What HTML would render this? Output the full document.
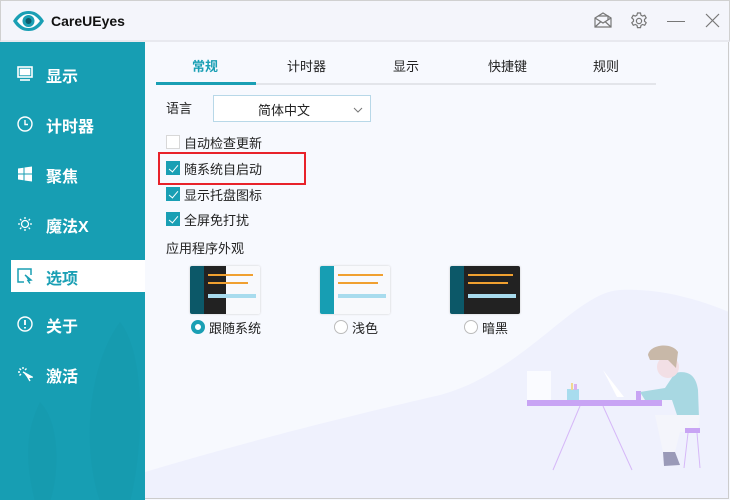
<!DOCTYPE html>
<html><head><meta charset="utf-8"><style>
*{margin:0;padding:0;box-sizing:border-box}
body{width:730px;height:500px;overflow:hidden;font-family:"Liberation Sans","Noto Sans CJK SC",sans-serif;background:#f7f9fe;position:relative;font-size:13px;color:#222}
.title{position:absolute;left:0;top:0;width:730px;height:42px;background:#f4f5fb;border:1px solid #d0d0d0;border-bottom:2px solid #e8e9ef}
.side{position:absolute;left:0;top:42px;width:145px;height:458px;background:#179eb3;overflow:hidden}
.item{position:absolute;left:0;width:145px;height:32px;color:#fff;font-weight:bold;font-size:16px}
.item .t{position:absolute;left:46px;top:5px}
.item svg{position:absolute;left:17px;top:8px}
.sel{left:11px;width:134px;background:#fff;color:#1a9fb4}
.sel .t{left:35px}
.sel svg{left:6px}
.content{position:absolute;left:145px;top:42px;width:584px;height:457px;border-right:1px solid #ccc;border-bottom:1px solid #ccc;overflow:hidden}
.abs{position:absolute}
.cb{position:absolute;left:166px;width:14px;height:14px;border:1px solid #d8d8d8;background:#fff}
.cb.on{background:#1a9fb4;border-color:#1a9fb4}
.cb.on:after{content:"";position:absolute;left:4px;top:1px;width:4px;height:8px;border:solid #fff;border-width:0 1.5px 1.5px 0;transform:rotate(40deg)}
.lbl{position:absolute;left:184px;font-size:13px}
.radio{position:absolute;width:14px;height:14px;border-radius:50%;border:1px solid #bbb;background:#fff}
.thumb{position:absolute;width:70px;height:48px;border-radius:2px;overflow:hidden;box-shadow:0 0 2px #ccc}
</style></head><body>
<div class="title">
<svg class="abs" style="left:11px;top:9px" width="33" height="22" viewBox="0 0 33 22"><path d="M1 11C6 3 11 1 16.5 1S27 3 32 11C27 19 22 21 16.5 21S6 19 1 11Z" fill="#1a9fb4"/><path d="M5 11C9 6 12 4 16.5 4S24 6 28 11C24 16 21 18 16.5 18S9 16 5 11Z" fill="#fff"/><circle cx="16.5" cy="11" r="6" fill="#1a9fb4"/><circle cx="16.5" cy="11" r="3" fill="#0d5c6b"/></svg>
<div class="abs" style="left:50px;top:12px;font-weight:bold;font-size:14px;color:#111">CareUEyes</div>
<svg class="abs" style="left:593px;top:11px" width="18" height="16" viewBox="0 0 18 16" fill="none" stroke="#777" stroke-width="1.2"><path d="M1 6L9 1L17 6V15H1Z"/><path d="M1 6L9 11L17 6M1 15L7 9.5M17 15L11 9.5"/><path d="M4 4H14V8"/></svg>
<svg class="abs" style="left:629px;top:11px" width="18" height="18" viewBox="0 0 18 18" fill="none" stroke="#777" stroke-width="1.2"><path d="M7.5 1h3l.5 2.2 1.6.9 2.1-.8 1.5 2.6-1.7 1.5v1.8l1.7 1.5-1.5 2.6-2.1-.8-1.6.9-.5 2.2h-3l-.5-2.2-1.6-.9-2.1.8-1.5-2.6 1.7-1.5V7.4L1.7 5.9l1.5-2.6 2.1.8 1.6-.9Z"/><circle cx="9" cy="9" r="2.6"/></svg>
<div class="abs" style="left:666px;top:20px;width:18px;height:1px;background:#777"></div>
<svg class="abs" style="left:704px;top:12px" width="15" height="15" viewBox="0 0 15 15" stroke="#777" stroke-width="1.2"><path d="M1 1L14 14M14 1L1 14"/></svg>
</div>
<div class="side">
<svg class="abs" style="left:20px;top:280px;opacity:.06" width="125" height="180" viewBox="0 0 125 180"><path d="M100 0C125 30 125 120 110 180H80C60 120 70 40 100 0Z" fill="#0a6f80"/><path d="M20 80C40 100 40 150 30 180H15C5 140 5 110 20 80Z" fill="#0a6f80"/></svg>
<div class="item" style="top:16px"><svg width="16" height="16" viewBox="0 0 16 16" fill="none" stroke="#fff" stroke-width="1.6"><rect x="1" y="1" width="14" height="10"/><rect x="3.5" y="3.5" width="9" height="5" fill="#fff"/><path d="M3 14H13"/></svg><span class="t">显示</span></div>
<div class="item" style="top:66px"><svg width="16" height="16" viewBox="0 0 16 16" fill="none" stroke="#fff" stroke-width="1.4"><circle cx="8" cy="8" r="7"/><path d="M8 4V8.5H11"/></svg><span class="t">计时器</span></div>
<div class="item" style="top:116px"><svg width="16" height="16" viewBox="0 0 16 16" fill="#fff"><path d="M1 2.5L6.5 1.7V7.5H1ZM7.5 1.5L15 .5V7.5H7.5ZM1 8.5H6.5V14.3L1 13.5ZM7.5 8.5H15V15.5L7.5 14.5Z"/></svg><span class="t">聚焦</span></div>
<div class="item" style="top:166px"><svg width="16" height="16" viewBox="0 0 16 16" fill="none" stroke="#fff" stroke-width="1.3"><circle cx="8" cy="8" r="3.5"/><path d="M8 1V3M8 13V15M1 8H3M13 8H15M3 3L4.4 4.4M11.6 11.6L13 13M3 13L4.4 11.6M11.6 4.4L13 3"/></svg><span class="t">魔法X</span></div>
<div class="item sel" style="top:218px"><svg width="16" height="16" viewBox="0 0 16 16" fill="none" stroke="#1a9fb4" stroke-width="1.5"><path d="M14 7V1H1V14H7"/><path d="M8 7L14 12L11 12.5L13 15.5" fill="#1a9fb4"/></svg><span class="t">选项</span></div>
<div class="item" style="top:266px"><svg width="16" height="16" viewBox="0 0 16 16" fill="none" stroke="#fff" stroke-width="1.4"><circle cx="8" cy="8" r="7"/><path d="M8 4V9M8 11V12.5" stroke-width="1.8"/></svg><span class="t">关于</span></div>
<div class="item" style="top:316px"><svg width="16" height="16" viewBox="0 0 16 16" fill="none" stroke="#fff" stroke-width="1.4"><path d="M6 1V3M1 6H3M2.5 2.5L4 4M9.5 2.5L8 4M2.5 9.5L4 8"/><path d="M6 6L15 11L11 11.5L13 15" fill="#fff"/></svg><span class="t">激活</span></div>
</div>
<div class="content">
<svg class="abs" style="left:0;top:0" width="584" height="457" viewBox="0 0 584 457"><path d="M0 430C100 400 200 375 295 353C380 330 430 250 475 248C520 246 560 260 584 270V457H0Z" fill="#eff1fd"/></svg>
<div class="abs" style="left:11px;top:41px;width:500px;height:2px;background:#e3e5ea"></div>
<div class="abs" style="left:11px;top:40px;width:100px;height:3px;background:#1a9fb4"></div>
<div class="abs" style="left:47px;top:14px;color:#1a9fb4;font-weight:bold">常规</div>
<div class="abs" style="left:142px;top:14px">计时器</div>
<div class="abs" style="left:248px;top:14px">显示</div>
<div class="abs" style="left:343px;top:14px">快捷键</div>
<div class="abs" style="left:448px;top:14px">规则</div>
</div>
<svg class="abs" style="left:0;top:0" width="730" height="500" viewBox="0 0 730 500">
<rect x="527" y="371" width="24" height="29" fill="#fafbff"/>
<rect x="567" y="389" width="12" height="11" fill="#a8dcee"/><rect x="571" y="383" width="2" height="7" fill="#f0d890"/><rect x="574" y="384" width="3" height="6" fill="#d8b0f0"/>
<path d="M603 370L617 397H624Z" fill="#ffffff"/>
<rect x="527" y="400" width="135" height="6" fill="#c8a4f4"/>
<path d="M580 406L553 470M603 406L632 470" stroke="#d6b8f8" stroke-width="1"/>
<rect x="636" y="391" width="5" height="10" fill="#c8a4f4"/>
<path d="M640 392L665 388L675 373C688 370 696 375 698 390L699 418L678 418L672 400L645 400Z" fill="#a8d8e2"/>
<path d="M655 415L700 415L698 432L680 432L675 452H663Z" fill="#f4f5fb"/>
<path d="M663 452L675 452L680 465L664 466Z" fill="#9a9ab8"/>
<circle cx="668" cy="367" r="11" fill="#f2dfe5"/>
<path d="M648 355C650 344 672 342 678 352L676 368L668 360L650 360Z" fill="#c8b8a8"/>
<rect x="685" y="428" width="15" height="5" fill="#c8a4f4"/>
<path d="M688 433L684 468M697 433L700 468" stroke="#d6b8f8"/>
</svg>
<div class="abs" style="left:166px;top:98px">语言</div>
<div class="abs" style="left:213px;top:95px;width:158px;height:27px;border:1px solid #b8d8e8;background:#fff"><span class="abs" style="left:44px;top:4px">简体中文</span><svg class="abs" style="left:139px;top:11px" width="10" height="6" viewBox="0 0 10 6" fill="none" stroke="#777"><path d="M1 1L5 5L9 1"/></svg></div>
<div class="cb" style="top:135px"></div><div class="lbl" style="top:133px">自动检查更新</div>
<div class="cb on" style="top:161px"></div><div class="lbl" style="top:159px">随系统自启动</div>
<div class="abs" style="left:158px;top:152px;width:148px;height:33px;border:2px solid #e8222a"></div>
<div class="cb on" style="top:187px"></div><div class="lbl" style="top:185px">显示托盘图标</div>
<div class="cb on" style="top:212px"></div><div class="lbl" style="top:210px">全屏免打扰</div>
<div class="abs" style="left:166px;top:238px">应用程序外观</div>
<div class="thumb" style="left:190px;top:266px;background:linear-gradient(90deg,#0c5868 0 14px,#222 14px 36px,#f8f9fc 36px)"><div class="abs" style="left:18px;top:8px;width:45px;height:2px;background:#f0a030"></div><div class="abs" style="left:18px;top:16px;width:40px;height:2px;background:#f0a030"></div><div class="abs" style="left:18px;top:28px;width:48px;height:4px;background:#a8dcee"></div></div>
<div class="thumb" style="left:320px;top:266px;background:linear-gradient(90deg,#179eb3 0 14px,#f8f9fc 14px)"><div class="abs" style="left:18px;top:8px;width:45px;height:2px;background:#f0a030"></div><div class="abs" style="left:18px;top:16px;width:40px;height:2px;background:#f0a030"></div><div class="abs" style="left:18px;top:28px;width:48px;height:4px;background:#a8dcee"></div></div>
<div class="thumb" style="left:450px;top:266px;background:linear-gradient(90deg,#0c5868 0 14px,#222 14px)"><div class="abs" style="left:18px;top:8px;width:45px;height:2px;background:#f0a030"></div><div class="abs" style="left:18px;top:16px;width:40px;height:2px;background:#f0a030"></div><div class="abs" style="left:18px;top:28px;width:48px;height:4px;background:#a8dcee"></div></div>
<div class="radio" style="left:191px;top:320px;border:4px solid #1a9fb4"></div><div class="abs" style="left:209px;top:318px">跟随系统</div>
<div class="radio" style="left:334px;top:320px"></div><div class="abs" style="left:352px;top:318px">浅色</div>
<div class="radio" style="left:464px;top:320px"></div><div class="abs" style="left:482px;top:318px">暗黑</div>
</body></html>
